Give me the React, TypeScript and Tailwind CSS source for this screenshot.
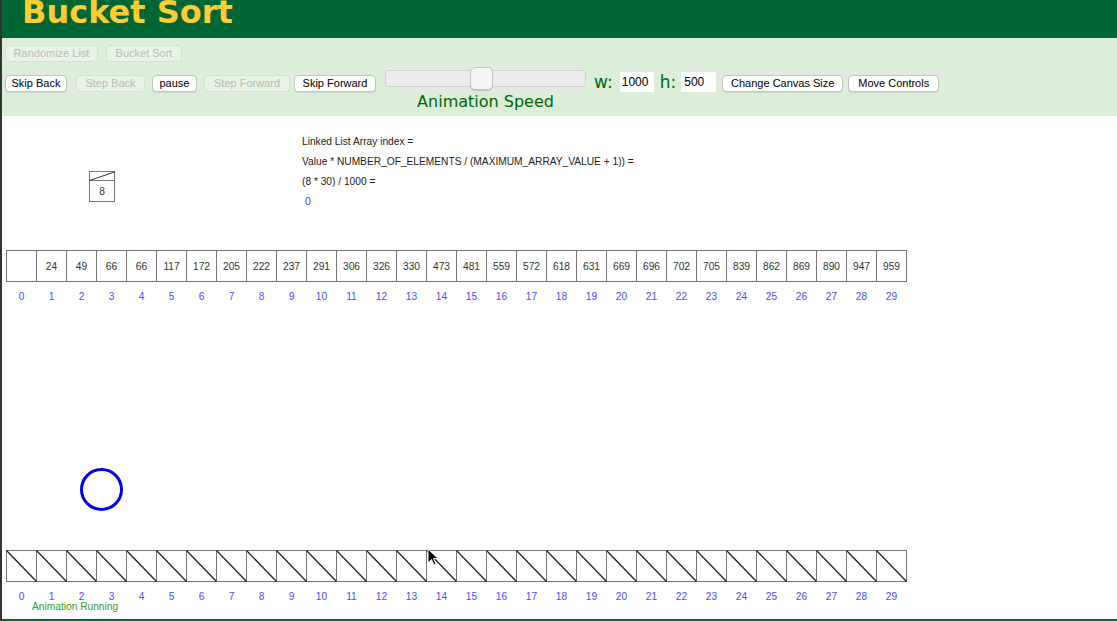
import React from 'react'

const values = [null, 24, 49, 66, 66, 117, 172, 205, 222, 237, 291, 306, 326, 330, 473, 481, 559, 572, 618, 631, 669, 696, 702, 705, 839, 862, 869, 890, 947, 959]

const CELL = 30
const LEFT = 6

function Btn({ label, disabled, className }: { label: string; disabled?: boolean; className: string }) {
  return (
    <button
      disabled={disabled}
      className={
        (disabled
          ? 'h-[17px] rounded-[4px] border border-[#d4e2d2] bg-[#e8f2e6] text-[11px] leading-none text-[#b4bfb3] '
          : 'h-[17px] rounded-[4px] border border-[#c4c4c4] bg-white text-[11px] leading-none text-black shadow-[0_1px_0_rgba(0,0,0,0.08)] ') +
        'flex items-center justify-center shrink-0 ' +
        className
      }
      style={{ fontFamily: '"Liberation Sans", Arial, sans-serif' }}
    >
      {label}
    </button>
  )
}

function Canvas() {
  const font = '"Liberation Sans", Arial, sans-serif'
  return (
    <svg width="1115" height="503" viewBox="2 116 1115 503" className="block">
      {/* formula */}
      <g fontFamily={font} fontSize="10.2" fill="#222">
        <text x="302" y="145">Linked List Array index =</text>
        <text x="302" y="165">Value * NUMBER_OF_ELEMENTS / (MAXIMUM_ARRAY_VALUE + 1)) =</text>
        <text x="302" y="185">(8 * 30) / 1000 =</text>
        <text x="305" y="205" fill="#3b3bff">0</text>
      </g>

      {/* moving node */}
      <g stroke="#777" fill="none" strokeWidth="1">
        <rect x="89.5" y="171.5" width="25" height="30" />
        <line x1="89.5" y1="180.5" x2="114.5" y2="180.5" />
        <line x1="89.5" y1="180.5" x2="114.5" y2="172" stroke="#333" />
      </g>
      <text x="102" y="194.5" fontFamily={font} fontSize="10.2" textAnchor="middle" fill="#333">8</text>

      {/* top array */}
      <g stroke="#777" fill="none" strokeWidth="1">
        <rect x={LEFT + 0.5} y="250.5" width={CELL * 30} height="31" />
        {values.map((_, i) =>
          i === 0 ? null : (
            <line key={i} x1={LEFT + CELL * i + 0.5} y1="250.5" x2={LEFT + CELL * i + 0.5} y2="281.5" />
          )
        )}
      </g>
      <g fontFamily={font} fontSize="10.2" textAnchor="middle" fill="#333">
        {values.map((v, i) =>
          v === null ? null : (
            <text key={i} x={LEFT + CELL * i + 15.5} y="270">
              {v}
            </text>
          )
        )}
      </g>
      <g fontFamily={font} fontSize="10.2" textAnchor="middle" fill="#4d4dff">
        {values.map((_, i) => (
          <text key={i} x={LEFT + CELL * i + 15.5} y="300">
            {i}
          </text>
        ))}
      </g>

      {/* highlight circle */}
      <circle cx="101.5" cy="489.5" r="20" stroke="#0000ee" strokeWidth="3" fill="none" />

      {/* bucket array */}
      <g stroke="#777" fill="none" strokeWidth="1">
        <rect x={LEFT + 0.5} y="550.5" width={CELL * 30} height="31" />
        {values.map((_, i) =>
          i === 0 ? null : (
            <line key={i} x1={LEFT + CELL * i + 0.5} y1="550.5" x2={LEFT + CELL * i + 0.5} y2="581.5" />
          )
        )}
      </g>
      <g stroke="#222" strokeWidth="1.3">
        {values.map((_, i) => (
          <line key={i} x1={LEFT + CELL * i + 0.5} y1="550.5" x2={LEFT + CELL * (i + 1) + 0.5} y2="581.5" />
        ))}
      </g>
      <g fontFamily={font} fontSize="10.2" textAnchor="middle" fill="#4d4dff">
        {values.map((_, i) => (
          <text key={i} x={LEFT + CELL * i + 15.5} y="600">
            {i}
          </text>
        ))}
      </g>
      <text x="32" y="610" fontFamily={font} fontSize="10.2" fill="#2ea02e">
        Animation Running
      </text>

      {/* mouse cursor */}
      <path
        d="M428 549 L428 563 L431.5 559.5 L434 565 L436 564 L433.5 558.5 L438 558.5 Z"
        fill="#000"
        stroke="#fff"
        strokeWidth="1"
        strokeLinejoin="round"
      />
    </svg>
  )
}

export default function App() {
  const label = '"DejaVu Sans", Verdana, sans-serif'
  return (
    <div className="w-[1117px] h-[621px] overflow-hidden bg-white border-l-2 border-[#333] flex flex-col">
      <header className="h-[38px] bg-[#006633] overflow-hidden pl-[20px]">
        <h1
          className="text-[32px] font-bold leading-none text-[#ffcc33] -mt-[4px]"
          style={{ fontFamily: label }}
        >
          Bucket Sort
        </h1>
      </header>

      <div className="h-[78px] bg-[#dcedda] pl-[3px] pt-[7px] flex flex-col">
        <div className="flex gap-[8px]">
          <Btn label="Randomize List" disabled className="w-[93px]" />
          <Btn label="Bucket Sort" disabled className="w-[76px]" />
        </div>

        <div className="flex items-start mt-[5px]">
          <div className="flex mt-[8px]">
            <Btn label="Skip Back" className="w-[62px]" />
            <Btn label="Step Back" disabled className="w-[69px] ml-[9px]" />
            <Btn label="pause" className="w-[45px] ml-[7px]" />
            <Btn label="Step Forward" disabled className="w-[86px] ml-[7px]" />
            <Btn label="Skip Forward" className="w-[82px] ml-[4px]" />
          </div>

          <div className="ml-[9px] w-[201px] flex flex-col items-center">
            <div className="relative w-full h-[23px]">
              <div className="absolute left-0 right-0 top-[3px] h-[17px] rounded-[4px] border border-[#d0d0d0] bg-[#ececec]" />
              <div className="absolute left-[85px] top-0 w-[23px] h-[23px] rounded-[5px] border border-[#c2c2c2] bg-[#f5f5f5] shadow-[0_1px_1px_rgba(0,0,0,0.15)]" />
            </div>
            <span className="text-[16px] leading-[18px] mt-[3px] text-[#006600]" style={{ fontFamily: label }}>
              Animation Speed
            </span>
          </div>

          <div className="flex items-center mt-[5px] ml-[8px]">
            <span className="text-[17px] leading-none text-[#006600]" style={{ fontFamily: label }}>
              w:
            </span>
            <input
              readOnly
              value="1000"
              className="ml-[7px] w-[34px] h-[20px] bg-white text-[12px] px-[2px] outline-none"
              style={{ fontFamily: '"Liberation Sans", Arial, sans-serif' }}
            />
            <span className="ml-[6px] text-[17px] leading-none text-[#006600]" style={{ fontFamily: label }}>
              h:
            </span>
            <input
              readOnly
              value="500"
              className="ml-[5px] w-[35px] h-[20px] bg-white text-[12px] px-[3px] outline-none"
              style={{ fontFamily: '"Liberation Sans", Arial, sans-serif' }}
            />
            <div className="ml-[6px] mt-[2px] flex gap-[5px]">
              <Btn label="Change Canvas Size" className="w-[121px]" />
              <Btn label="Move Controls" className="w-[91px]" />
            </div>
          </div>
        </div>
      </div>

      <div className="flex-1 relative">
        <Canvas />
      </div>
      <div className="h-[2px] bg-[#006633]" />
    </div>
  )
}
